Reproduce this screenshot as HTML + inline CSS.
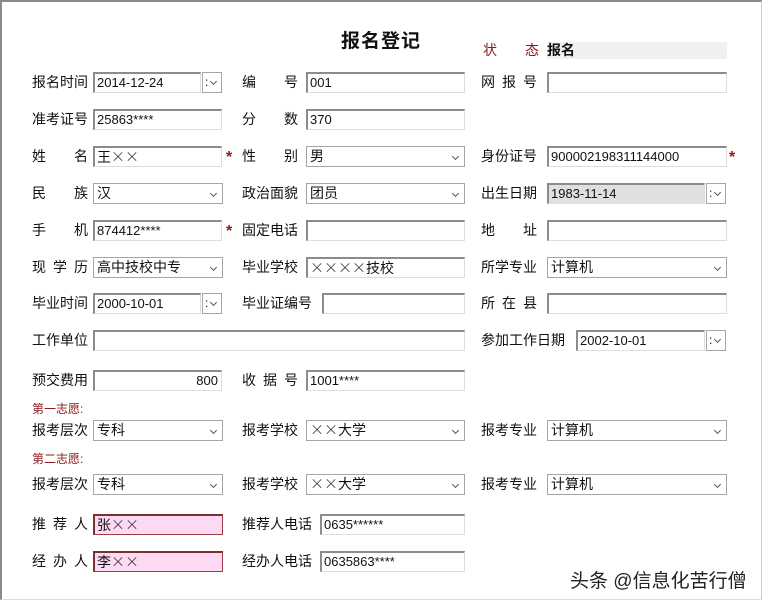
<!DOCTYPE html>
<html><head><meta charset="utf-8"><style>
body{margin:0;width:765px;height:605px;background:#fff;position:relative;overflow:hidden;font-family:"Liberation Sans","Noto Sans CJK SC",sans-serif;color:#111}
.frame{position:absolute;left:0;top:0;width:762px;height:600px;border-left:2px solid #8a8a8a;border-top:2px solid #8a8a8a;border-right:1px solid #ccc;border-bottom:1px solid #ddd;box-sizing:border-box}
.l{position:absolute;font-size:14px;width:56px;text-align:justify;text-align-last:justify;line-height:20px;white-space:nowrap}
.i,.s,.d{position:absolute;box-sizing:border-box;height:21px;font-size:13px;line-height:18px;padding-left:2px;white-space:nowrap;overflow:hidden;background:#fff}
.i{border-top:2px solid #8c8c8c;border-left:2px solid #8c8c8c;border-right:1px solid #ddd;border-bottom:1px solid #ddd}
.s{border:1px solid #a5a5a5;font-size:14px;padding-left:3px}
.s::after{content:"";position:absolute;right:6px;top:7px;width:4px;height:4px;border-right:1.5px solid #555;border-bottom:1.5px solid #555;transform:rotate(45deg)}
.d{border:1px solid #a5a5a5;width:20px}
.d::before{content:":";position:absolute;left:2px;top:0;font-size:12px}
.d::after{content:"";position:absolute;right:5px;top:6px;width:4px;height:4px;border-right:1.5px solid #555;border-bottom:1.5px solid #555;transform:rotate(45deg)}
.star{position:absolute;color:#8b1a1a;font-size:16px;font-weight:bold}
.pk{background:#fdd9f3;border:1px solid #9a4040;border-top:2px solid #7a3030;border-left:2px solid #7a3030}
.red{color:#8b1a1a}
.x{font-family:"Noto Sans CJK SC",sans-serif;font-weight:300}
</style></head><body>
<div class="frame"></div>
<div style="position:absolute;left:341px;top:26px;font-size:19px;font-weight:bold;letter-spacing:1px">报名登记</div>
<div class="l red" style="left:483px;top:40px">状 态</div>
<div style="position:absolute;left:547px;top:42px;width:180px;height:17px;background:#f0f0f0;font-size:14px;font-weight:bold;line-height:17px">报名</div>

<div class="l" style="left:32px;top:72px">报名时间</div>
<div class="i" style="left:93px;top:72px;width:108px">2014-12-24</div><div class="d" style="left:202px;top:72px"></div>
<div class="l" style="left:242px;top:72px">编 号</div>
<div class="i" style="left:306px;top:72px;width:159px">001</div>
<div class="l" style="left:481px;top:72px">网 报 号</div>
<div class="i" style="left:547px;top:72px;width:180px"></div>

<div class="l" style="left:32px;top:109px">准考证号</div>
<div class="i" style="left:93px;top:109px;width:129px">25863****</div>
<div class="l" style="left:242px;top:109px">分 数</div>
<div class="i" style="left:306px;top:109px;width:159px">370</div>

<div class="l" style="left:32px;top:146px">姓 名</div>
<div class="i" style="left:93px;top:146px;width:129px;font-size:14px">王<span class="x">××</span></div>
<div class="star" style="left:226px;top:149px">*</div>
<div class="l" style="left:242px;top:146px">性 别</div>
<div class="s" style="left:306px;top:146px;width:159px">男</div>
<div class="l" style="left:481px;top:146px">身份证号</div>
<div class="i" style="left:547px;top:146px;width:180px">900002198311144000</div>
<div class="star" style="left:729px;top:149px">*</div>

<div class="l" style="left:32px;top:183px">民 族</div>
<div class="s" style="left:93px;top:183px;width:130px">汉</div>
<div class="l" style="left:242px;top:183px">政治面貌</div>
<div class="s" style="left:306px;top:183px;width:159px">团员</div>
<div class="l" style="left:481px;top:183px">出生日期</div>
<div class="i" style="left:547px;top:183px;width:158px;background:#e0e0e0">1983-11-14</div><div class="d" style="left:706px;top:183px"></div>

<div class="l" style="left:32px;top:220px">手 机</div>
<div class="i" style="left:93px;top:220px;width:129px">874412****</div>
<div class="star" style="left:226px;top:223px">*</div>
<div class="l" style="left:242px;top:220px">固定电话</div>
<div class="i" style="left:306px;top:220px;width:159px"></div>
<div class="l" style="left:481px;top:220px">地 址</div>
<div class="i" style="left:547px;top:220px;width:180px"></div>

<div class="l" style="left:32px;top:257px">现 学 历</div>
<div class="s" style="left:93px;top:257px;width:130px">高中技校中专</div>
<div class="l" style="left:242px;top:257px">毕业学校</div>
<div class="i" style="left:306px;top:257px;width:159px;font-size:14px"><span class="x">××××</span>技校</div>
<div class="l" style="left:481px;top:257px">所学专业</div>
<div class="s" style="left:547px;top:257px;width:180px">计算机</div>

<div class="l" style="left:32px;top:293px">毕业时间</div>
<div class="i" style="left:93px;top:293px;width:108px">2000-10-01</div><div class="d" style="left:202px;top:293px"></div>
<div class="l" style="left:242px;top:293px;width:70px">毕业证编号</div>
<div class="i" style="left:322px;top:293px;width:143px"></div>
<div class="l" style="left:481px;top:293px">所 在 县</div>
<div class="i" style="left:547px;top:293px;width:180px"></div>

<div class="l" style="left:32px;top:330px">工作单位</div>
<div class="i" style="left:93px;top:330px;width:372px"></div>
<div class="l" style="left:481px;top:330px;width:84px">参加工作日期</div>
<div class="i" style="left:576px;top:330px;width:129px">2002-10-01</div><div class="d" style="left:706px;top:330px"></div>

<div class="l" style="left:32px;top:370px">预交费用</div>
<div class="i" style="left:93px;top:370px;width:129px;text-align:right;padding-right:3px">800</div>
<div class="l" style="left:242px;top:370px">收 据 号</div>
<div class="i" style="left:306px;top:370px;width:159px">1001****</div>

<div class="red" style="position:absolute;left:32px;top:400px;font-size:12px">第一志愿:</div>
<div class="l" style="left:32px;top:420px">报考层次</div>
<div class="s" style="left:93px;top:420px;width:130px">专科</div>
<div class="l" style="left:242px;top:420px">报考学校</div>
<div class="s" style="left:306px;top:420px;width:159px"><span class="x">××</span>大学</div>
<div class="l" style="left:481px;top:420px">报考专业</div>
<div class="s" style="left:547px;top:420px;width:180px">计算机</div>

<div class="red" style="position:absolute;left:32px;top:450px;font-size:12px">第二志愿:</div>
<div class="l" style="left:32px;top:474px">报考层次</div>
<div class="s" style="left:93px;top:474px;width:130px">专科</div>
<div class="l" style="left:242px;top:474px">报考学校</div>
<div class="s" style="left:306px;top:474px;width:159px"><span class="x">××</span>大学</div>
<div class="l" style="left:481px;top:474px">报考专业</div>
<div class="s" style="left:547px;top:474px;width:180px">计算机</div>

<div class="l" style="left:32px;top:514px">推 荐 人</div>
<div class="i pk" style="left:93px;top:514px;width:130px;font-size:14px">张<span class="x">××</span></div>
<div class="l" style="left:242px;top:514px;width:70px">推荐人电话</div>
<div class="i" style="left:320px;top:514px;width:145px">0635******</div>

<div class="l" style="left:32px;top:551px">经 办 人</div>
<div class="i pk" style="left:93px;top:551px;width:130px;font-size:14px">李<span class="x">××</span></div>
<div class="l" style="left:242px;top:551px;width:70px">经办人电话</div>
<div class="i" style="left:320px;top:551px;width:145px">0635863****</div>

<div style="position:absolute;left:570px;top:566px;font-size:19px;color:#222;text-shadow:1px 1px 0 #fff,-1px -1px 0 #fff">头条 @信息化苦行僧</div>
</body></html>
